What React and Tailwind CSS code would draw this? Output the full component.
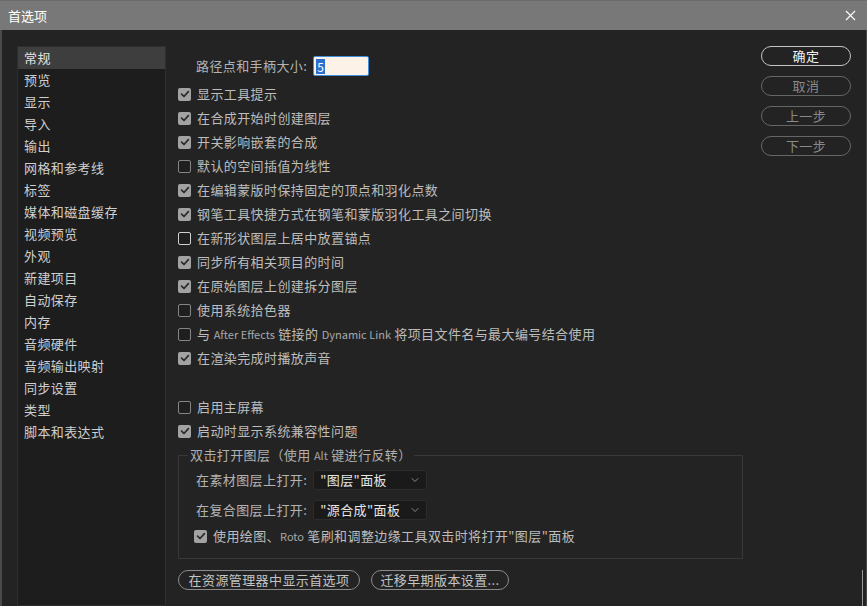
import React from 'react';
import { X, ChevronDown } from 'lucide-react';

const sidebar = ['常规','预览','显示','导入','输出','网格和参考线','标签','媒体和磁盘缓存','视频预览','外观','新建项目','自动保存','内存','音频硬件','音频输出映射','同步设置','类型','脚本和表达式'];

const checks1 = [
  ['显示工具提示', true],
  ['在合成开始时创建图层', true],
  ['开关影响嵌套的合成', true],
  ['默认的空间插值为线性', false],
  ['在编辑蒙版时保持固定的顶点和羽化点数', true],
  ['钢笔工具快捷方式在钢笔和蒙版羽化工具之间切换', true],
  ['在新形状图层上居中放置锚点', false, true],
  ['同步所有相关项目的时间', true],
  ['在原始图层上创建拆分图层', true],
  ['使用系统拾色器', false],
  ['与 After Effects 链接的 Dynamic Link 将项目文件名与最大编号结合使用', false],
  ['在渲染完成时播放声音', true],
];

function Mixed({ text }) {
  const parts = text.split(/([A-Za-z][A-Za-z ]*[A-Za-z]|[A-Za-z])/g);
  return parts.map((p, i) =>
    /[A-Za-z]/.test(p) ? (
      <span key={i} className="text-[11px] tracking-normal text-[#a9a9a9]">{p}</span>
    ) : (
      <React.Fragment key={i}>{p}</React.Fragment>
    )
  );
}

function Box({ checked, bright }) {
  if (checked) {
    return (
      <span className="w-[13px] h-[13px] rounded-[2px] bg-[#a2a2a2] flex items-center justify-center shrink-0">
        <svg width="10" height="10" viewBox="0 0 10 10">
          <path d="M1.6 5.2 L4 7.5 L8.4 2.6" stroke="#2a2a2a" strokeWidth="1.7" fill="none" strokeLinecap="round" strokeLinejoin="round" />
        </svg>
      </span>
    );
  }
  return (
    <span className={bright ? "w-[13px] h-[13px] rounded-[2px] border-[1.5px] border-[#cfcfcf] bg-[#1f1f1f] shrink-0" : "w-[13px] h-[13px] rounded-[2px] border-[1.5px] border-[#858585] bg-[#1f1f1f] shrink-0"} />
  );
}

function CheckRow({ label, checked, bright }) {
  return (
    <div className="h-[24px] flex items-center gap-[6px]">
      <Box checked={checked} bright={bright} />
      <span className="text-[13px] tracking-[0.4px] text-[#bdbdbd] whitespace-nowrap"><Mixed text={label} /></span>
    </div>
  );
}

function Select({ value }) {
  return (
    <div className="w-[114px] h-[20px] bg-[#1a1a1a] border border-[#2c2c2c] rounded-[2px] flex items-center justify-between pl-[6px] pr-[5px]">
      <span className="text-[13px] tracking-[0.4px] text-[#e6e6e6] whitespace-nowrap">{value}</span>
      <ChevronDown size={12} strokeWidth={1.5} className="text-[#b0b0b0]" />
    </div>
  );
}

export default function App() {
  return (
    <div className="w-[867px] h-[606px] overflow-hidden bg-[#232323] flex flex-col relative font-['Noto_Sans_CJK_SC','Noto_Sans',sans-serif] leading-[18px]">
      {/* title bar */}
      <div className="h-[30px] shrink-0 bg-[#787878] border-t border-[#6c6c6c] flex items-center justify-between pl-[8px] pr-[8px]">
        <span className="text-[13px] text-white">首选项</span>
        <X size={17} strokeWidth={1.6} className="text-white" />
      </div>

      <div className="flex-1 flex border-l-[2px] border-r border-[#4a4a4a]">
        {/* sidebar */}
        <div className="mt-[16px] ml-[15px] w-[149px] bg-[#1d1d1d] border border-[#2e2e2e] flex flex-col">
          {sidebar.map((s, i) => (
            <div key={s} className={i === 0 ? "h-[22px] flex items-center pl-[6px] bg-[#3e3e3e] text-[13px] tracking-[0.4px] text-[#e2e2e2]" : "h-[22px] flex items-center pl-[6px] text-[13px] tracking-[0.4px] text-[#cfcfcf]"}>
              {s}
            </div>
          ))}
        </div>

        {/* content */}
        <div className="ml-[12px] flex-1 pt-[26px] flex flex-col">
          <div className="h-[26px] flex items-start pl-[18px] gap-[6px]">
            <span className="text-[13px] tracking-[0.4px] text-[#b3b3b3] leading-[20px] whitespace-nowrap">路径点和手柄大小:</span>
            <div className="w-[56px] h-[20px] bg-[#fcf2e8] border-[1.5px] border-[#3f8fdc] rounded-[2px] flex items-center pl-[2px]">
              <span className="bg-[#2c6fd0] text-white text-[12px] leading-[15px] px-[1px]">5</span>
            </div>
          </div>

          {checks1.map(([l, c, b]) => (
            <CheckRow key={l} label={l} checked={c} bright={b} />
          ))}

          <div className="h-[25px]" />
          <CheckRow label="启用主屏幕" checked={false} />
          <CheckRow label="启动时显示系统兼容性问题" checked={true} />

          <fieldset className="mt-[3px] w-[565px] border border-[#383838] pl-[17px] pb-[12px]">
            <legend className="ml-[-8px] px-[2px] text-[13px] tracking-[0.4px] text-[#b0b0b0] whitespace-nowrap">双击打开图层（使用 <span className="text-[11px] tracking-normal text-[#a5a5a5]">Alt</span> 键进行反转）</legend>
            <div className="mt-[6px] flex items-center gap-[6px]">
              <span className="text-[13px] tracking-[0.4px] text-[#b3b3b3] whitespace-nowrap">在素材图层上打开:</span>
              <Select value={'"图层"面板'} />
            </div>
            <div className="mt-[10px] flex items-center gap-[6px]">
              <span className="text-[13px] tracking-[0.4px] text-[#b3b3b3] whitespace-nowrap">在复合图层上打开:</span>
              <Select value={'"源合成"面板'} />
            </div>
            <div className="mt-[6px] h-[20px] flex items-center gap-[6px] ml-[-2px]">
              <Box checked={true} />
              <span className="text-[13px] tracking-[0.4px] text-[#bdbdbd] whitespace-nowrap">使用绘图、<span className="text-[11px] tracking-normal text-[#a9a9a9]">Roto</span> 笔刷和调整边缘工具双击时将打开"图层"面板</span>
            </div>
          </fieldset>

          <div className="mt-[11px] flex gap-[11px]">
            <button className="w-[182px] h-[20px] rounded-full border border-[#8a8a8a] text-[13px] tracking-[0.4px] text-[#c4c4c4] flex items-center justify-center leading-[18px]">在资源管理器中显示首选项</button>
            <button className="w-[138px] h-[20px] rounded-full border border-[#8a8a8a] text-[13px] tracking-[0.4px] text-[#c4c4c4] flex items-center justify-center leading-[18px]">迁移早期版本设置...</button>
          </div>
        </div>

        {/* right buttons */}
        <div className="mt-[16px] mr-[15px] w-[90px] flex flex-col gap-[10px]">
          <button className="h-[20px] rounded-full border border-[#c4c4c4] text-[13px] tracking-[0.4px] text-[#f2f2f2] flex items-center justify-center leading-[18px]">确定</button>
          <button className="h-[20px] rounded-full border border-[#666666] text-[13px] tracking-[0.4px] text-[#8a8a8a] flex items-center justify-center leading-[18px]">取消</button>
          <button className="h-[20px] rounded-full border border-[#666666] text-[13px] tracking-[0.4px] text-[#8a8a8a] flex items-center justify-center leading-[18px]">上一步</button>
          <button className="h-[20px] rounded-full border border-[#666666] text-[13px] tracking-[0.4px] text-[#8a8a8a] flex items-center justify-center leading-[18px]">下一步</button>
        </div>
      </div>

      <div className="absolute right-[4px] bottom-0 w-[1px] h-[36px] bg-[#9a9a9a]" />
    </div>
  );
}
